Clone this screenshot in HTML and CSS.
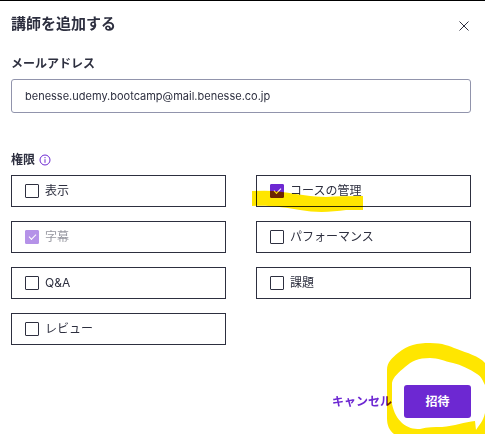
FILE: index.html
```html
<!DOCTYPE html>
<html lang="ja">
<head>
    <meta charset="utf-8">
    <title>講師を追加する</title>
    <link rel="stylesheet" href="styles.css">
</head>
<body>
    <form class="dialog">
        <header class="dialog-header">
            <h1>講師を追加する</h1>
            <button type="button" class="close-button" aria-label="閉じる">
                <svg width="10" height="10" viewBox="0 0 10 10" fill="none" stroke="currentColor"><path d="M.5 .5l9 9M9.5 .5l-9 9"/></svg>
            </button>
        </header>

        <div class="field">
            <label for="email">メールアドレス</label>
            <input type="email" id="email" value="benesse.udemy.bootcamp@mail.benesse.co.jp">
        </div>

        <fieldset class="permissions">
            <legend>
                権限
                <svg class="info-icon" width="12" height="12" viewBox="0 0 12 12" fill="none" stroke="currentColor"><circle cx="6" cy="6" r="5"/><path d="M6 5.2v3.6M6 3v1.2"/></svg>
            </legend>
            <div class="options">
                <label class="option"><input type="checkbox">表示</label>
                <label class="option">
                    <input type="checkbox" checked>コースの管理
                    <!-- マーカー -->
                    <svg class="marker marker-line" width="112" height="23" viewBox="252 190 112 23"><path d="M252 191Q272 190 282 192C298 194 312 197 326 197Q340 196 363 196V210H346C332 212 316 213 300 210C286 208 272 205 252 206Z"/></svg>
                </label>
                <label class="option disabled"><input type="checkbox" checked disabled>字幕</label>
                <label class="option"><input type="checkbox">パフォーマンス</label>
                <label class="option"><input type="checkbox">Q&amp;A</label>
                <label class="option"><input type="checkbox">課題</label>
                <label class="option"><input type="checkbox">レビュー</label>
            </div>
        </fieldset>

        <footer class="actions">
            <button type="button" class="cancel-button">キャンセル</button>
            <div class="invite">
                <button type="submit" class="invite-button">招待</button>
                <svg class="marker marker-circle" width="99" height="94" viewBox="386 342 99 94"><path d="M387 370C387 362 392 358 398 353C408 345 417 343 430 343C443 343 449 346 457 349C467 353 479 356 485 363V385C483 381 481 376 477 374C470 369 461 365 453 363C444 361 438 358 430 358C418 358 412 361 405 367C399 372 393 377 392 383V404C394 413 397 418 402 423C408 428 413 429 420 429C428 427 434 427 442 427C454 426 465 422 475 421L476 430C479 425 483 422 485 413V434H394C389 430 387 425 387 418Z"/></svg>
            </div>
        </footer>
    </form>
</body>
</html>
```

FILE: styles.css
```css
body {
    margin: 0;
    background-color: #fff;
    border-top: 1px solid #000;
    color: #2d2f3f;
    font-family: Inter, "Noto Sans CJK JP", sans-serif;
    font-size: 12px;
    line-height: 18px;
}

button, input {
    font: inherit;
    color: inherit;
    box-sizing: border-box;
}

button {
    border: none;
    padding: 0;
    background: none;
    cursor: pointer;
}

.dialog {
    padding: 11px 14px 16px 11px;
}

.dialog-header {
    display: flex;
    justify-content: space-between;
    align-items: center;
    margin-bottom: 19px;
}

h1 {
    margin: 0;
    font-size: 15px;
    line-height: 24px;
}

.close-button {
    display: flex;
    padding: 4px 2px 0;
}

.field {
    display: flex;
    flex-direction: column;
    gap: 6px;
    margin-bottom: 38px;
    font-weight: bold;
}

.field input {
    height: 34px;
    padding: 0 13px;
    border: 1px solid #9194ac;
    border-radius: 3px;
    font-size: 11px;
    font-weight: normal;
}

.permissions {
    margin: 0;
    padding: 0;
    border: none;
}

legend {
    display: flex;
    align-items: center;
    gap: 4px;
    margin-bottom: 6px;
    padding: 0;
    font-weight: bold;
}

.info-icon {
    color: #6d28d2;
}

.options {
    display: grid;
    grid-template-columns: 1fr 1fr;
    gap: 14px 30px;
}

.option {
    position: relative;
    display: flex;
    align-items: center;
    gap: 6px;
    height: 32px;
    box-sizing: border-box;
    padding: 0 13px;
    border: 1px solid #2d2f3f;
}

.option input {
    appearance: none;
    display: flex;
    justify-content: center;
    align-items: center;
    width: 14px;
    height: 14px;
    margin: 0;
    border: 1px solid #2d2f3f;
    border-radius: 1px;
}

.option input:checked {
    border-color: #6d28d2;
    background-color: #6d28d2;
}

.option input:checked::after {
    content: "";
    width: 6px;
    height: 3px;
    margin-bottom: 2px;
    border: solid #fff;
    border-width: 0 0 1px 1px;
    transform: rotate(-45deg);
}

.disabled {
    color: #9697a0;
}

.option input:disabled {
    opacity: 0.5;
}

.actions {
    display: flex;
    justify-content: flex-end;
    align-items: center;
    gap: 12px;
    margin-top: 40px;
    font-weight: bold;
}

.cancel-button {
    color: #6d28d2;
}

.invite {
    position: relative;
}

.invite-button {
    display: block;
    min-width: 67px;
    height: 33px;
    border-radius: 3px;
    background-color: #6d28d2;
    color: #fff;
}

.marker {
    position: absolute;
    fill: #ffe600;
    mix-blend-mode: multiply;
    pointer-events: none;
}

.marker-line {
    top: 14px;
    left: -5px;
}

.marker-circle {
    top: -43px;
    left: -18px;
}
```
